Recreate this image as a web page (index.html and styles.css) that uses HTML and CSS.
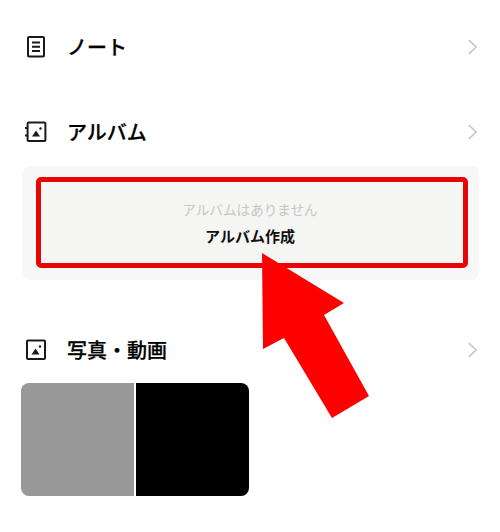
FILE: index.html
```html
<!DOCTYPE html>
<html lang="ja">
<head>
<meta charset="utf-8">
<title>アルバム</title>
<link rel="stylesheet" href="styles.css">
</head>
<body>
<main class="page">
  <div class="row row-note">
    <svg class="icon" viewBox="0 0 22 22" width="22" height="22" fill="none" stroke="#1a1a1a" stroke-width="2">
      <rect x="3" y="1" width="16" height="19.400" rx="1"/>
      <path d="M7 6.500h8M7 10.700h8M7 15h8"/>
    </svg>
    <span class="label">ノート</span>
    <svg class="chev" viewBox="0 0 12 18" width="12" height="18" fill="none" stroke="#c4c4c4" stroke-width="1.6"><path d="M2 1.500 10 9 2 16.500"/></svg>
  </div>
  <div class="row row-album">
    <svg class="icon" viewBox="0 0 22 22" width="22" height="22" fill="none" stroke="#1a1a1a" stroke-width="2">
      <rect x="2.600" y="1.600" width="17.800" height="18.400" rx="1"/>
      <path d="M0 7h3M0 14.500h3"/>
      <path d="M7 15.500 11 9.500 15 15.500Z" fill="#1a1a1a" stroke="none"/>
      <circle cx="15.500" cy="7.500" r="1.200" fill="#1a1a1a" stroke="none"/>
    </svg>
    <span class="label">アルバム</span>
    <svg class="chev" viewBox="0 0 12 18" width="12" height="18" fill="none" stroke="#c4c4c4" stroke-width="1.6"><path d="M2 1.500 10 9 2 16.500"/></svg>
  </div>
  <section class="panel">
    <div class="callout">
      <p class="empty">アルバムはありません</p>
      <p class="create">アルバム作成</p>
    </div>
  </section>
  <div class="row row-photo">
    <svg class="icon" viewBox="0 0 22 22" width="22" height="22" fill="none" stroke="#1a1a1a" stroke-width="2">
      <rect x="2" y="1.600" width="18" height="18.400" rx="1"/>
      <path d="M6.500 15.500 10.500 9.500 14.500 15.500Z" fill="#1a1a1a" stroke="none"/>
      <circle cx="15" cy="7.500" r="1.200" fill="#1a1a1a" stroke="none"/>
    </svg>
    <span class="label">写真・動画</span>
    <svg class="chev" viewBox="0 0 12 18" width="12" height="18" fill="none" stroke="#c4c4c4" stroke-width="1.6"><path d="M2 1.500 10 9 2 16.500"/></svg>
  </div>
  <div class="tiles">
    <div class="tile tile-grey"></div>
    <div class="tile tile-black"></div>
  </div>
  <svg class="arrow" viewBox="0 0 500 532" width="500" height="532"><polygon fill="#ff0000" points="262,253 344,303 324,315 369,396 332,418 284,338 263,349"/></svg>
</main>
</body>
</html>
```
FILE: styles.css
```css
* { box-sizing: border-box; }
html, body { margin: 0; background: #fff; }
body { font-family: "Noto Sans CJK JP", "Liberation Sans", sans-serif; color: #111; }
.page { position: relative; width: 500px; height: 532px; overflow: hidden; padding: 25px 21px 0 21px; }
.row { display: flex; align-items: center; height: 44px; padding-left: 4px; }
.row-album { margin-top: 41px; }
.row-photo { margin-top: 48px; }
.icon { flex: none; }
.label { margin-left: 20px; font-size: 20px; font-weight: 500; line-height: 1; color: #000; -webkit-text-stroke: 0.25px #000; }
.chev { flex: none; margin-left: auto; margin-right: 1px; width: 11px; }
.panel { margin: 12px 0 0 1px; height: 114px; padding: 11px 11px 12px 14px; background: #f7f7f7; border-radius: 8px; }
.callout { height: 91px; border: 5px solid #e80508; border-radius: 5px; background: #f5f5f4; text-align: center; padding: 15px 4px 0 0; }
.empty { margin: 0; font-size: 13.6px; line-height: 24px; color: #c6c6c6; }
.create { margin: 3px 0 0; font-size: 15px; font-weight: 700; line-height: 24px; color: #111; }
.tiles { display: flex; gap: 2px; width: 228px; height: 113px; margin-top: 11px; border-radius: 8px; overflow: hidden; }
.tile { flex: 1; }
.tile-grey { background: #999; }
.tile-black { background: #000; }
.arrow { position: absolute; left: 0; top: 0; pointer-events: none; }
```
